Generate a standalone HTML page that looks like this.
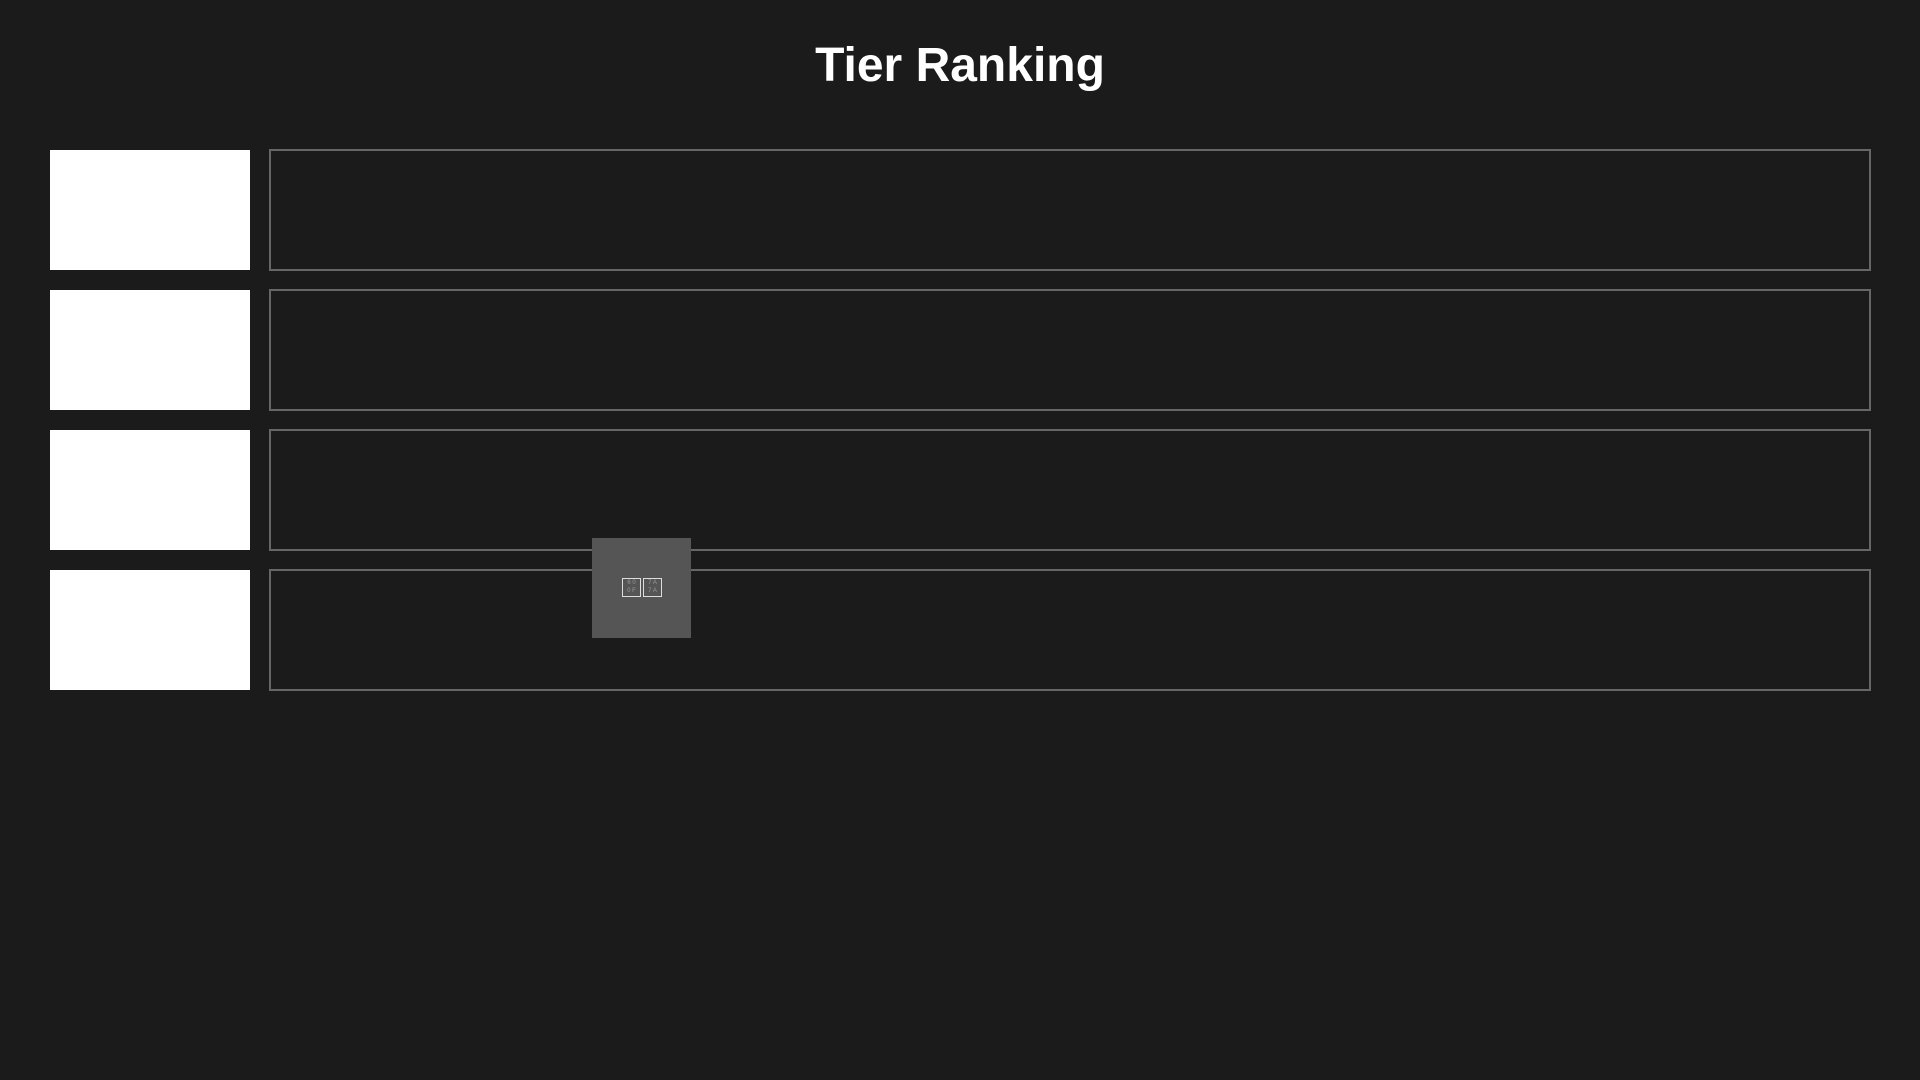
<!DOCTYPE html>
<html><head><style>
html,body{margin:0;padding:0;background:#1b1b1b;width:1920px;height:1080px;overflow:hidden;font-family:"Liberation Sans",sans-serif;}
h1{position:absolute;top:42px;left:0;width:1920px;margin:0;text-align:center;color:#fff;font-size:48px;line-height:48px;font-weight:bold;}
.lab{position:absolute;left:50px;width:200px;height:120px;background:#fff;}
.row{position:absolute;left:269px;width:1602px;height:122px;box-sizing:border-box;border:2px solid #666;}
.drag{position:absolute;left:592px;top:538px;width:99px;height:100px;background:#555;}
.g{position:absolute;top:40px;width:19px;height:19px;border:1px solid #ddd;box-sizing:border-box;font-size:6px;color:#999;line-height:8px;text-align:center;}
</style></head><body>
<h1>Tier Ranking</h1>
<div class="lab" style="top:150px"></div><div class="row" style="top:149px"></div>
<div class="lab" style="top:290px"></div><div class="row" style="top:289px"></div>
<div class="lab" style="top:430px"></div><div class="row" style="top:429px"></div>
<div class="lab" style="top:570px"></div><div class="row" style="top:569px"></div>
<div class="drag"><div class="g" style="left:30px">6 0<br>0 F</div><div class="g" style="left:51px">7 A<br>7 A</div></div>
</body></html>
